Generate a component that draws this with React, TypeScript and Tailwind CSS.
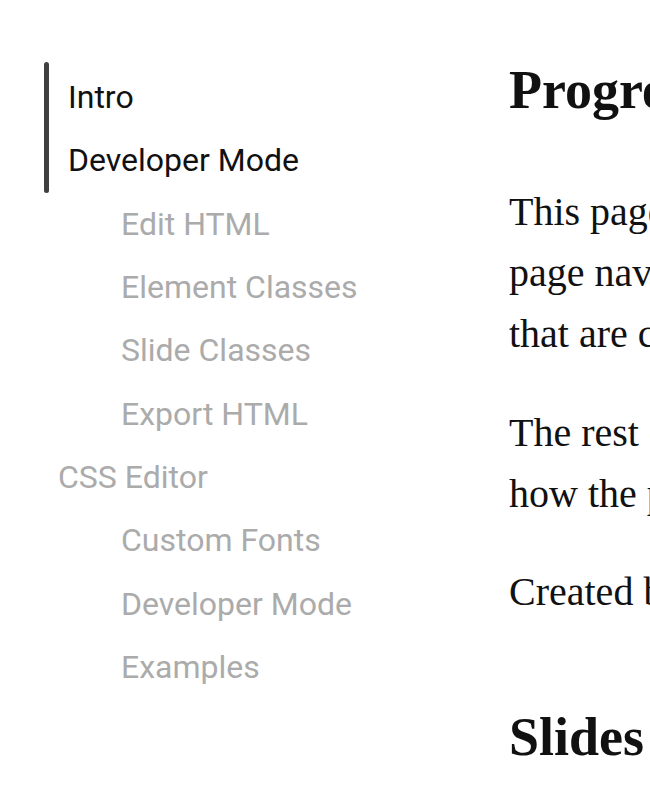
import React from 'react';

const sans = { fontFamily: 'Roboto, "Noto Sans", sans-serif' };

interface NavItem {
  label: string;
  depth: 0 | 1;
}

const activeItems: NavItem[] = [
  { label: 'Intro', depth: 0 },
  { label: 'Developer Mode', depth: 0 },
];

const restItems: NavItem[] = [
  { label: 'Edit HTML', depth: 1 },
  { label: 'Element Classes', depth: 1 },
  { label: 'Slide Classes', depth: 1 },
  { label: 'Export HTML', depth: 1 },
  { label: 'CSS Editor', depth: 0 },
  { label: 'Custom Fonts', depth: 1 },
  { label: 'Developer Mode', depth: 1 },
  { label: 'Examples', depth: 1 },
];

function Sidebar() {
  return (
    <nav className="w-[509px] shrink-0 pl-[44px] pt-[62px] font-['Roboto',sans-serif] text-[32px]">
      <div className="flex">
        <div className="w-[5px] shrink-0 rounded-full bg-[#404040]" />
        <ul className="pl-[19px] pt-[4px]">
          {activeItems.map((item) => (
            <li key={item.label} className="leading-[63.33px] text-[#111111]">
              {item.label}
            </li>
          ))}
        </ul>
      </div>
      <ul>
        {restItems.map((item, i) => (
          <li
            key={i}
            className={
              item.depth === 1
                ? 'pl-[77px] leading-[63.33px] text-[#ababab]'
                : 'pl-[14px] leading-[63.33px] text-[#ababab]'
            }
          >
            {item.label}
          </li>
        ))}
      </ul>
    </nav>
  );
}

function Content() {
  return (
    <main className="min-w-0 flex-1 overflow-hidden whitespace-nowrap font-['Liberation_Serif',serif] text-[#111111]">
      <h1 className="mt-[58px] text-[54px] font-bold leading-[64px]">Progressive Navigation</h1>
      <p className="mt-[59px] text-[40px] leading-[61px]">
        This page demonstrates the progressive
        <br />
        page navigation sidebar, which highlights sections
        <br />
        that are currently visible on the screen.
      </p>
      <p className="mt-[38px] text-[40px] leading-[61px]">
        The rest of this page explains
        <br />
        how the plugin works and how to use it.
      </p>
      <p className="mt-[37px] text-[40px] leading-[61px]">Created by the community.</p>
      <h2 className="mt-[83px] text-[54px] font-bold leading-[64px]">Slides Setup</h2>
    </main>
  );
}

export default function App() {
  return (
    <div className="flex h-[800px] w-[650px] overflow-hidden bg-white" style={sans}>
      <Sidebar />
      <Content />
    </div>
  );
}
